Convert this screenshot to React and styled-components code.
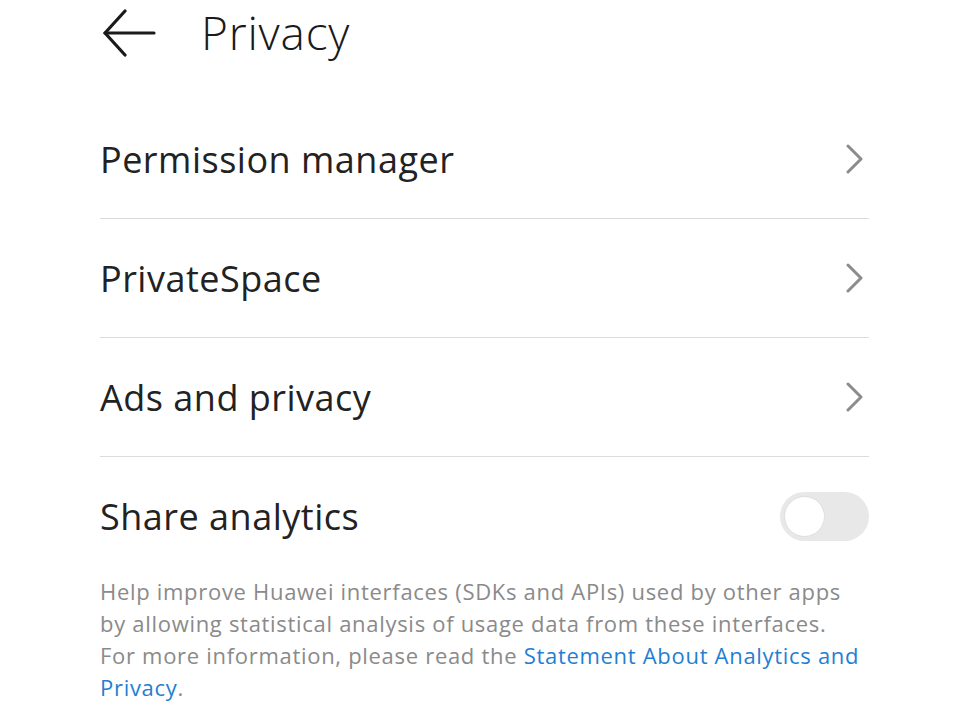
import React from 'react'
import styled, { createGlobalStyle } from 'styled-components'

const Global = createGlobalStyle`
  body {
    margin: 0;
    background: #fff;
    font-family: "Open Sans", "Noto Sans", sans-serif;
    color: #1a1a1a;
  }
`

const Page = styled.div`
  width: 968px;
  height: 726px;
  overflow: hidden;
  padding: 0 99px 0 100px;
  box-sizing: border-box;
`

const Header = styled.div`
  display: flex;
  align-items: center;
  height: 64px;
  gap: 44px;
`

const BackButton = styled.div`
  width: 54px;
  height: 50px;
  display: flex;
  align-items: center;
  margin-left: 3px;
  margin-top: 2px;
`

const Title = styled.div`
  font-size: 46px;
  font-weight: 300;
  color: #1a1a1a;
  letter-spacing: 0.8px;
`

const List = styled.div`
  margin-top: 36px;
`

const Row = styled.div`
  display: flex;
  align-items: center;
  justify-content: space-between;
  height: 118px;
  border-bottom: ${p => (p.last ? 'none' : '1px solid #dcdcdc')};
`

const Label = styled.div`
  font-size: 36px;
  font-weight: 400;
  color: #222;
  letter-spacing: 0.5px;
`

const Chevron = styled.div`
  width: 30px;
  display: flex;
  justify-content: flex-end;
  padding-right: 5px;
`

const Toggle = styled.div`
  width: 89px;
  height: 49px;
  border-radius: 25px;
  background: #e8e8e8;
  display: flex;
  align-items: center;
  padding: 0 4px;
  box-sizing: border-box;
`

const Knob = styled.div`
  width: 41px;
  height: 41px;
  border-radius: 50%;
  background: #fff;
  border: 1px solid #dedede;
  box-sizing: border-box;
`

const Description = styled.p`
  margin: 0;
  font-size: 22px;
  line-height: 32px;
  color: #8a8a8a;
  letter-spacing: 0.7px;
  white-space: nowrap;
`

const Link = styled.span`
  color: #1f80d2;
`

function ChevronIcon () {
  return (
    <svg width="18" height="30" viewBox="0 0 18 30">
      <polyline points="2,2 15,15 2,28" fill="none" stroke="#8c8c8c" strokeWidth="3" strokeLinecap="round" strokeLinejoin="round" />
    </svg>
  )
}

const items = ['Permission manager', 'PrivateSpace', 'Ads and privacy']

export default function App () {
  return (
    <Page>
      <Global />
      <Header>
        <BackButton>
          <svg width="54" height="48" viewBox="0 0 54 48">
            <polyline points="22,2 2,24 22,46" fill="none" stroke="#1a1a1a" strokeWidth="3.2" strokeLinecap="round" strokeLinejoin="round" />
            <line x1="2" y1="24" x2="51" y2="24" stroke="#1a1a1a" strokeWidth="3.2" strokeLinecap="round" />
          </svg>
        </BackButton>
        <Title>Privacy</Title>
      </Header>
      <List>
        {items.map(item => (
          <Row key={item}>
            <Label>{item}</Label>
            <Chevron><ChevronIcon /></Chevron>
          </Row>
        ))}
        <Row last>
          <Label>Share analytics</Label>
          <Toggle><Knob /></Toggle>
        </Row>
      </List>
      <Description>
        Help improve Huawei interfaces (SDKs and APIs) used by other apps<br />
        by allowing statistical analysis of usage data from these interfaces.<br />
        For more information, please read the <Link>Statement About Analytics and</Link><br />
        <Link>Privacy</Link>.
      </Description>
    </Page>
  )
}
